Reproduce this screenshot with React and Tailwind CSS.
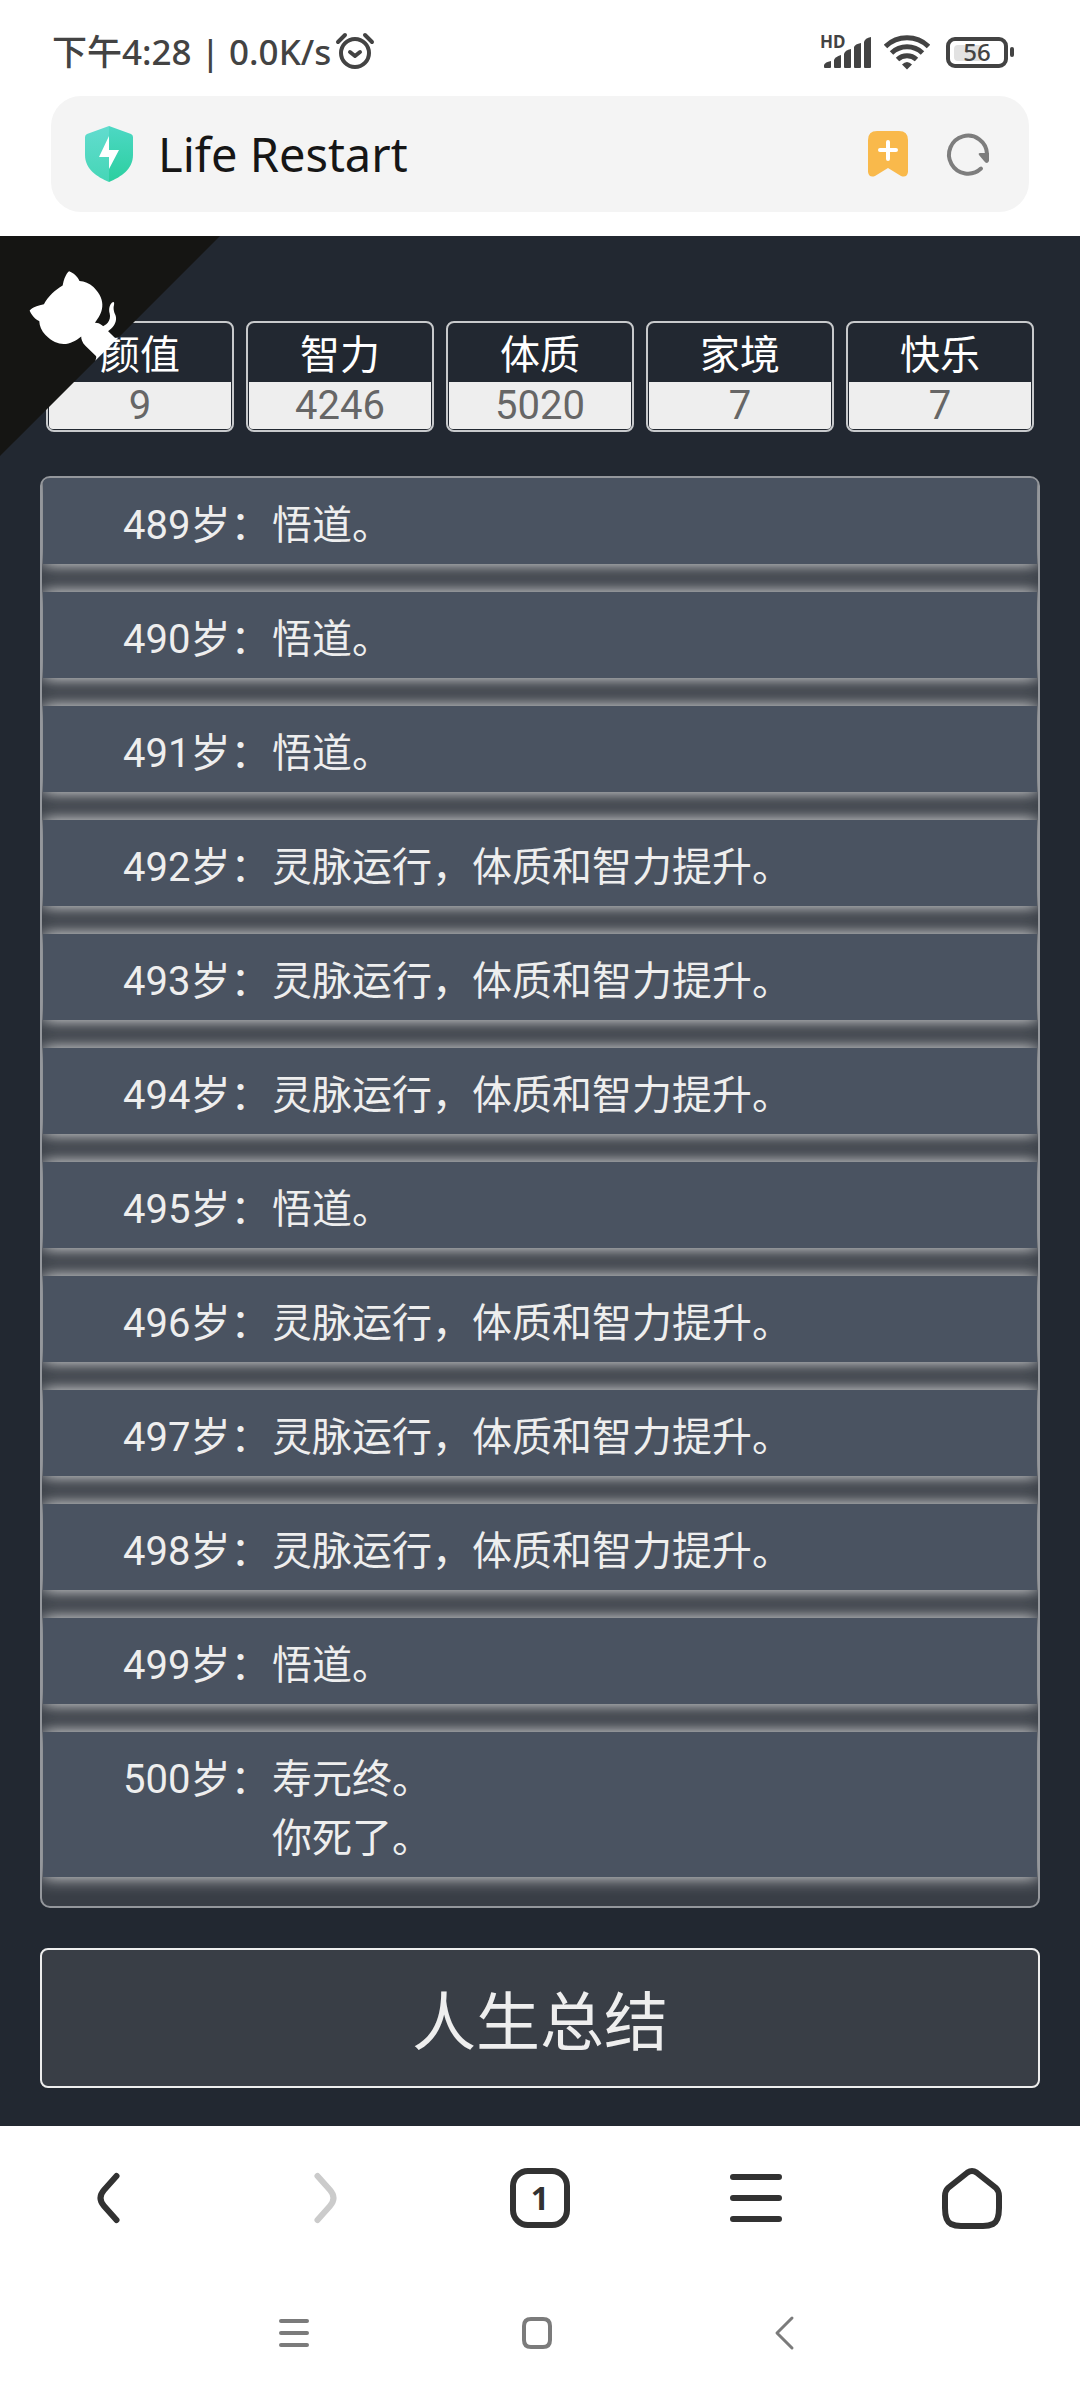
import { useState } from "react";

const stats = [
  { label: "颜值", value: 9 },
  { label: "智力", value: 4246 },
  { label: "体质", value: 5020 },
  { label: "家境", value: 7 },
  { label: "快乐", value: 7 },
];

const WU_DAO = "悟道。";
const LING_MAI = "灵脉运行，体质和智力提升。";

const trajectory = [
  { age: 489, events: [WU_DAO] },
  { age: 490, events: [WU_DAO] },
  { age: 491, events: [WU_DAO] },
  { age: 492, events: [LING_MAI] },
  { age: 493, events: [LING_MAI] },
  { age: 494, events: [LING_MAI] },
  { age: 495, events: [WU_DAO] },
  { age: 496, events: [LING_MAI] },
  { age: 497, events: [LING_MAI] },
  { age: 498, events: [LING_MAI] },
  { age: 499, events: [WU_DAO] },
  { age: 500, events: ["寿元终。", "你死了。"] },
];

function StatusBar() {
  return (
    <div className="flex h-24 items-center justify-between pt-2 pr-[66px] pl-[52px] text-[#434343]">
      <div className="flex items-center gap-1">
        <span className="text-[35px] font-medium">下午4:28 | 0.0K/s</span>
        <svg width="40" height="40" viewBox="0 0 40 40" fill="none" stroke="currentColor" strokeLinecap="round">
          <circle cx="20" cy="21" r="14" strokeWidth="4" />
          <path d="M15 20l5 4 5-4" strokeWidth="4" strokeLinejoin="round" />
          <path d="M3 10l7-7M37 10l-7-7" strokeWidth="4" />
        </svg>
      </div>
      <div className="flex items-center">
        <div className="relative mr-3">
          <svg width="52" height="36" viewBox="0 0 52 36" fill="currentColor">
            <path d="M4 31q1-3 7-4v6q0 1-1 1H5q-1 0-1-1z" />
            <path d="M14 26q1-3 7-5v12q0 1-1 1h-5q-1 0-1-1z" />
            <path d="M24 20q1-4 7-5v18q0 1-1 1h-5q-1 0-1-1z" />
            <path d="M34 13q1-3 7-4v24q0 1-1 1h-5q-1 0-1-1z" />
            <path d="M44 8q1-4 7-5v30q0 1-1 1h-5q-1 0-1-1z" />
          </svg>
          <span className="absolute top-0 left-0 text-[17px] leading-4 font-bold">HD</span>
        </div>
        <svg className="mr-4" width="46" height="36" viewBox="0 0 46 36" fill="none" stroke="currentColor" strokeWidth="5">
          <path d="M1.500 12.500a31 31 0 0 1 43 0" />
          <path d="M7.500 19a22.500 22.500 0 0 1 31 0" />
          <path d="M13.500 25.500a14 14 0 0 1 19 0" />
          <path d="M18 30.500q5-5 10 0l-5 5z" fill="currentColor" stroke="none" />
        </svg>
        <div className="flex items-center gap-[2px]">
          <div className="relative flex h-[31px] w-[62px] items-center justify-center rounded-[9px] border-4 border-[#434343]">
            <div className="absolute top-1 left-1 h-4 w-7 rounded-sm bg-[#e2e2e2]" />
            <span className="relative text-[24px] leading-6 font-medium">56</span>
          </div>
          <div className="h-[10px] w-1 rounded-sm bg-[#434343]" />
        </div>
      </div>
    </div>
  );
}

function AddressBar() {
  return (
    <div className="mx-[51px] mb-6 flex h-[116px] items-center rounded-[30px] bg-[#f4f4f4] pr-[37px] pl-[34px]">
      <svg width="48" height="56" viewBox="0 0 48 56">
        <defs>
          <linearGradient id="shieldLeft" x1="0" y1="0" x2="0" y2="1">
            <stop offset="0" stopColor="#62dccf" />
            <stop offset="1" stopColor="#45d6b6" />
          </linearGradient>
          <linearGradient id="shieldRight" x1="0" y1="0" x2="0" y2="1">
            <stop offset="0" stopColor="#4dd8c4" />
            <stop offset="1" stopColor="#2bcf9f" />
          </linearGradient>
        </defs>
        <path d="M24 0L2 8Q0 9 0 11v18c0 14 12 22 24 27z" fill="url(#shieldLeft)" />
        <path d="M24 0l22 8q2 1 2 3v18c0 14-12 22-24 27z" fill="url(#shieldRight)" />
        <path d="M24 10L14 31h10v12l10-19H24z" fill="#fff" />
      </svg>
      <h1 className="ml-[25px] flex-1 text-[47px] leading-none text-[#161616]">Life Restart</h1>
      <button aria-label="添加书签">
        <svg width="40" height="46" viewBox="0 0 40 46">
          <path d="M9 0h22q9 0 9 9v32q-1 6-7 4L20 37 7 45Q1 47 0 41V9Q0 0 9 0z" fill="#f9b94b" />
          <path d="M20 11v17M12 19h16" stroke="#fff" strokeWidth="4" strokeLinecap="round" />
        </svg>
      </button>
      <button className="ml-9" aria-label="刷新">
        <svg width="48" height="48" viewBox="0 0 48 48">
          <path d="M37 38.500A19 19 0 1 1 43 24v4" fill="none" stroke="#7d7d7d" strokeWidth="4" strokeLinecap="round" />
          <path d="M36 23h9v8q-2 4-5 0l-5-6q-1-2 1-2z" fill="#7d7d7d" />
        </svg>
      </button>
    </div>
  );
}

function GithubCorner() {
  return (
    <a href="#github" className="absolute top-0 left-0" aria-label="GitHub">
      <svg className="-scale-x-100 fill-[#151513] text-white" width="220" height="220" viewBox="0 0 250 250">
        <path d="M0,0 L115,115 L130,115 L142,142 L250,250 L250,0 Z" />
        <path
          d="M128.3,109.0 C113.8,99.7 119.0,89.6 119.0,89.6 C122.0,82.7 120.5,78.6 120.5,78.6 C119.2,72.0 123.4,76.3 123.4,76.3 C127.3,80.9 125.5,87.3 125.5,87.3 C122.9,97.6 130.6,101.9 134.4,103.2"
          fill="currentColor"
        />
        <path
          d="M115.0,115.0 C114.9,115.1 118.7,116.5 119.8,115.4 L133.7,101.6 C136.9,99.2 139.9,98.4 142.2,98.6 C133.8,88.0 127.5,74.4 143.8,58.0 C148.5,53.4 154.0,51.2 159.7,51.0 C160.3,49.4 163.2,43.6 171.4,40.1 C171.4,40.1 176.1,42.5 178.8,56.2 C183.1,58.6 187.2,61.8 190.9,65.4 C194.5,69.0 197.7,73.2 200.1,77.6 C213.8,80.2 216.3,84.9 216.3,84.9 C212.7,93.1 206.9,96.0 205.4,96.6 C205.1,102.4 203.0,107.8 198.3,112.5 C181.9,128.9 168.3,122.5 157.7,114.1 C157.9,116.9 156.7,120.9 152.7,124.9 L141.0,136.5 C139.8,137.7 141.6,141.9 141.8,141.8 Z"
          fill="currentColor"
        />
      </svg>
    </a>
  );
}

function Stats() {
  return (
    <dl className="grid grid-cols-5 gap-3 px-[6px] text-center text-[40px]">
      {stats.map((stat) => (
        <div key={stat.label} className="rounded-lg border-2 border-[#c8cacc] px-px pb-px">
          <dt className="pt-[6px] leading-[53px] text-white">{stat.label}</dt>
          <dd className="rounded-b-sm bg-[#eeeeee] leading-[47px] text-[#666666]">{stat.value}</dd>
        </div>
      ))}
    </dl>
  );
}

function Trajectory() {
  return (
    <ul className="mt-11 flex flex-col gap-7 overflow-hidden rounded-[10px] border-2 border-[#94979c] bg-[#393e46] px-px pb-[29px] text-[40px] leading-[59px] text-[#eeeeee]">
      {trajectory.map(({ age, events }) => (
        <li key={age} className="flex bg-[#4a5361] pt-[18px] pr-10 pb-[9px] pl-20 shadow-[0_0_16px_#eeeeee]">
          <span className="min-w-[149px]">{age}岁：</span>
          <span>
            {events.map((event) => (
              <span key={event} className="block">
                {event}
              </span>
            ))}
          </span>
        </li>
      ))}
    </ul>
  );
}

function BrowserNav() {
  return (
    <nav className="grid h-36 grid-cols-5 items-center justify-items-center text-[#323232]">
      <button aria-label="后退">
        <svg width="72" height="72" viewBox="0 0 72 72" fill="none" stroke="currentColor" strokeWidth="6" strokeLinecap="round">
          <path d="M44.500 14L32 28q-7 8 0 16l12.500 14" />
        </svg>
      </button>
      <button className="text-[#cbcbcb]" aria-label="前进" disabled>
        <svg width="72" height="72" viewBox="0 0 72 72" fill="none" stroke="currentColor" strokeWidth="6" strokeLinecap="round">
          <path d="M29.500 14L42 28q7 8 0 16L29.500 58" />
        </svg>
      </button>
      <button className="flex size-[60px] items-center justify-center rounded-[18px] border-6 border-[#323232] text-[32px] leading-none font-bold">
        1
      </button>
      <button aria-label="菜单">
        <svg width="72" height="72" viewBox="0 0 72 72" fill="none" stroke="currentColor" strokeWidth="6" strokeLinecap="round">
          <path d="M13 15h46M13 36h46M13 57h46" />
        </svg>
      </button>
      <button aria-label="主页">
        <svg width="72" height="72" viewBox="0 0 72 72" fill="none" stroke="currentColor" strokeWidth="6" strokeLinejoin="round">
          <path d="M31.500 10.500q4.500-3 9 0L60 26q3 3 3 8v12q0 13-6 16-4 2-10 2H25q-6 0-10-2-6-3-6-16V34q0-5 3-8z" />
        </svg>
      </button>
    </nav>
  );
}

function SystemNav() {
  return (
    <nav className="flex h-[126px] items-center justify-center gap-[202px] pr-1 text-[#7b7b7b]">
      <button aria-label="最近任务">
        <svg width="42" height="42" viewBox="0 0 42 42" fill="none" stroke="currentColor" strokeWidth="4" strokeLinecap="round">
          <path d="M8 9h26M8 21h26M8 33h26" />
        </svg>
      </button>
      <button aria-label="桌面">
        <svg width="42" height="42" viewBox="0 0 42 42" fill="none" stroke="currentColor" strokeWidth="4">
          <path d="M14 7h12q7 0 7 7v14q0 7-7 7H14q-7 0-7-7V14q0-7 7-7z" />
        </svg>
      </button>
      <button aria-label="返回">
        <svg width="42" height="42" viewBox="0 0 42 42" fill="none" stroke="currentColor" strokeWidth="3" strokeLinecap="round" strokeLinejoin="round">
          <path d="M31 6L16 21l15 15" />
        </svg>
      </button>
    </nav>
  );
}

export default function App() {
  const [finished, setFinished] = useState(false);

  return (
    <div className="flex min-h-screen flex-col bg-white font-['Noto_Sans','Noto_Sans_CJK_SC',sans-serif]">
      <header>
        <StatusBar />
        <AddressBar />
      </header>
      <main className="relative bg-[#222831] px-10 pt-[85px] pb-[38px] font-['Roboto','Noto_Sans_CJK_SC',sans-serif]">
        <Stats />
        <Trajectory />
        <button
          className="mt-10 block w-full rounded-lg border-2 border-[#eeeeee] bg-[#393e46] pt-[34px] pb-[22px] text-[64px] leading-[80px] text-[#eeeeee]"
          aria-pressed={finished}
          onClick={() => setFinished(true)}
        >
          人生总结
        </button>
        <GithubCorner />
      </main>
      <footer>
        <BrowserNav />
        <SystemNav />
      </footer>
    </div>
  );
}
